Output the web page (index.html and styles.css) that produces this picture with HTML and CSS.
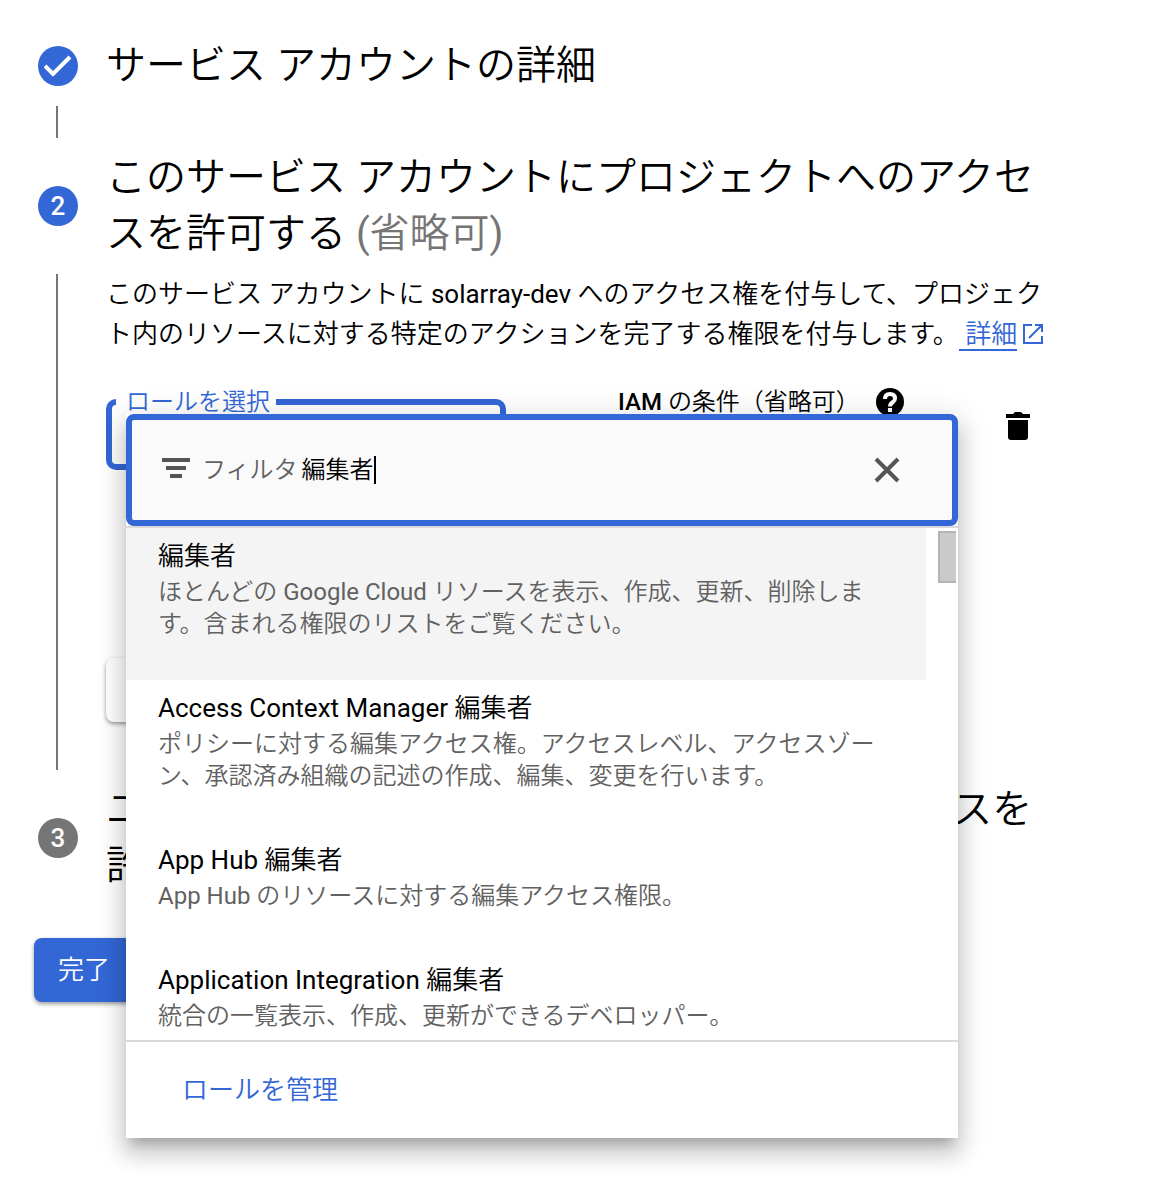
FILE: index.html
```
<!DOCTYPE html>
<html lang="ja">
<head>
<meta charset="utf-8">
<title>サービス アカウントの作成</title>
<link rel="stylesheet" href="styles.css">
</head>
<body>
<main class="page">
  <!-- Step 1: done -->
  <section class="step">
    <span class="badge">
      <svg width="28" height="28" viewBox="0 0 28 28"><path d="M1 14 L9 22 L26 5" fill="none" stroke="#fff" stroke-width="4"/></svg>
    </span>
    <h2 class="stepTitle">サービス アカウントの詳細</h2>
  </section>
  <div class="connector shortLine"></div>

  <!-- Step 2: current -->
  <section class="step">
    <span class="badge">2</span>
    <h2 class="stepTitle">このサービス アカウントにプロジェクトへのアクセスを許可する <span class="optional">(省略可)</span></h2>
  </section>
  <div class="stepBody">
    <div class="connector"></div>
    <div class="stepContent">
      <p class="description">このサービス アカウントに solarray-dev へのアクセス権を付与して、プロジェクト内のリソースに対する特定のアクションを完了する権限を付与します。<a class="detailLink" href="#"><span class="linkText">&nbsp;詳細</span><svg class="openIcon" width="20" height="20" viewBox="0 0 20 20"><path d="M9 1H1V19H19V12M12 1H19V8M18 2L6 14" fill="none" stroke="currentColor" stroke-width="2"/></svg></a></p>
      <div class="roleRow">
        <fieldset class="roleField">
          <legend><label for="role">ロールを選択</label></legend>
          <select id="role"><option></option></select>
        </fieldset>
        <div class="condition">
          <span><b>IAM</b> の条件（省略可）</span>
          <button type="button" class="iconButton" aria-label="ヘルプ">
            <svg width="28" height="28" viewBox="0 0 28 28"><circle cx="14" cy="14" r="14"/><path d="M9 11Q9 6 14 6Q19 6 19 10.500Q19 12.500 17 14Q14 16 14 18.500M14 20V24" fill="none" stroke="#fff" stroke-width="4"/></svg>
          </button>
        </div>
        <button type="button" class="iconButton deleteButton" aria-label="削除">
          <svg width="24" height="28" viewBox="0 0 24 28"><path d="M0 2H7L9 0H15L17 2H24V6H0zM2 8H22V25Q22 28 19 28H5Q2 28 2 25z"/></svg>
        </button>

        <!-- Role picker, opens over the row -->
        <div class="picker">
          <div class="filterBar">
            <svg width="28" height="24" viewBox="0 0 28 24"><path d="M0 0H28V4H0zM4 8H24V12H4zM8 16H20V20H8z" fill="#555"/></svg>
            <label class="filterLabel" for="filter">フィルタ</label>
            <input class="filterInput" type="text" id="filter" value="編集者">
            <span class="caret"></span>
            <button type="button" class="iconButton clearButton" aria-label="クリア">
              <svg width="26" height="26" viewBox="0 0 26 26"><path d="M2 2L24 24M24 2L2 24" stroke="#555" stroke-width="4"/></svg>
            </button>
          </div>
          <div class="optionArea">
            <ul class="options" role="listbox" aria-label="ロール">
              <li class="option selected" role="option" aria-selected="true">
                <div class="optionName">編集者</div>
                <div class="optionText">ほとんどの Google Cloud リソースを表示、作成、更新、削除します。含まれる権限のリストをご覧ください。</div>
              </li>
              <li class="option" role="option">
                <div class="optionName">Access Context Manager 編集者</div>
                <div class="optionText">ポリシーに対する編集アクセス権。アクセスレベル、アクセスゾーン、承認済み組織の記述の作成、編集、変更を行います。</div>
              </li>
              <li class="option" role="option">
                <div class="optionName">App Hub 編集者</div>
                <div class="optionText">App Hub のリソースに対する編集アクセス権限。</div>
              </li>
              <li class="option" role="option">
                <div class="optionName">Application Integration 編集者</div>
                <div class="optionText">統合の一覧表示、作成、更新ができるデベロッパー。</div>
              </li>
            </ul>
            <div class="scrollTrack"><div class="scrollThumb"></div></div>
          </div>
          <div class="pickerFooter"><a href="#">ロールを管理</a></div>
        </div>
      </div>
      <button type="button" class="button addButton" aria-label="別のロールを追加"></button>
    </div>
  </div>

  <!-- Step 3 -->
  <section class="step">
    <span class="badge pending">3</span>
    <h2 class="stepTitle">ユーザーにこのサービス アカウントへのアクセスを許可する</h2>
  </section>

  <button type="button" class="button doneButton">完了</button>
</main>
</body>
</html>
```
FILE: styles.css
```
* {
  box-sizing: border-box;
}
body {
  margin: 0;
  background-color: #fff;
  color: #000;
  font-family: Roboto, "Noto Sans CJK JP DemiLight", "Noto Sans CJK JP Light", "Noto Sans CJK JP", sans-serif;
  font-size: 26px;
  line-height: 40px;
}
button, input, select {
  font: inherit;
}
svg {
  display: block;
}
.page {
  min-height: 100vh;
  padding: 26px 100px 40px 34px;
}

/* Stepper */
.step {
  display: flex;
  align-items: center;
  gap: 28px;
  padding: 12px 0 12px 4px;
}
.badge {
  display: flex;
  align-items: center;
  justify-content: center;
  flex: none;
  width: 40px;
  height: 40px;
  border-radius: 50%;
  background-color: #3367d6;
  color: #fff;
  font-weight: 500;
}
.pending {
  background-color: #757575;
}
.stepTitle {
  margin: 0;
  font-size: 40px;
  font-weight: 400;
  line-height: 56px;
}
.optional {
  color: #757575;
}
.connector {
  flex: none;
  width: 2px;
  margin-left: 22px;
  background-color: #757575;
}
.shortLine {
  height: 32px;
}
.stepBody {
  display: flex;
  gap: 48px;
}
.stepContent {
  flex: 1;
  padding-bottom: 48px;
}
.description {
  margin: 0 0 32px;
}
.detailLink {
  color: #3367d6;
  text-decoration: none;
  white-space: nowrap;
}
.linkText {
  border-bottom: 2px solid #3367d6;
}
.openIcon {
  display: inline-block;
  margin-left: 6px;
  vertical-align: -1px;
}

/* Role row */
.roleRow {
  position: relative;
  display: flex;
  align-items: flex-start;
  margin-bottom: 188px;
  font-size: 24px;
  line-height: 32px;
}
.roleField {
  flex: 0 1 400px;
  min-width: 0;
  height: 84px;
  margin: 0 112px 0 0;
  padding: 0 4px;
  border: 6px solid #3367d6;
  border-radius: 10px;
}
.roleField legend {
  padding: 0 6px 0 10px;
  color: #3367d6;
}
.roleField select {
  width: 100%;
  border: 0;
  background: none;
  appearance: none;
}
.condition {
  display: flex;
  flex: 1;
  align-items: center;
  gap: 16px;
}
.condition b {
  font-weight: 500;
}
.iconButton {
  padding: 0;
  border: 0;
  background: none;
}
.deleteButton {
  margin: 26px 20px 0 0;
}

/* Picker */
.picker {
  position: absolute;
  top: 28px;
  left: 20px;
  right: 92px;
  background-color: #fff;
  box-shadow: 0 10px 10px -6px rgba(0, 0, 0, 0.2), 0 16px 20px 2px rgba(0, 0, 0, 0.14), 0 6px 28px 4px rgba(0, 0, 0, 0.12);
}
.filterBar {
  display: flex;
  align-items: center;
  height: 112px;
  padding: 0 52px 0 30px;
  border: 6px solid #3367d6;
  border-radius: 8px;
  background-color: #fafafa;
}
.filterLabel {
  margin: 0 4px 0 12px;
  color: #616161;
}
.filterInput {
  field-sizing: content;
  padding: 0;
  border: 0;
  outline: none;
  background: none;
  color: #000;
}
.caret {
  width: 2px;
  height: 28px;
  background-color: #000;
}
.clearButton {
  margin-left: auto;
}
.optionArea {
  display: flex;
  height: 516px;
  border-top: 2px solid #dadada;
  border-bottom: 2px solid #dadada;
  overflow: hidden;
}
.options {
  flex: 1;
  margin: 0;
  padding: 0;
  list-style: none;
}
.option {
  padding: 8px 48px 40px 32px;
}
.selected {
  background-color: #f4f4f4;
}
.optionName {
  font-size: 26px;
  line-height: 40px;
}
.optionText {
  color: #616161;
}
.scrollTrack {
  width: 32px;
  padding: 3px 2px 0 12px;
}
.scrollThumb {
  height: 52px;
  border: 2px solid #b4b4b4;
  border-right: 0;
  background-color: #cacaca;
}
.pickerFooter {
  padding: 28px 56px;
  font-size: 26px;
  line-height: 40px;
}
.pickerFooter a {
  color: #3367d6;
  text-decoration: none;
}

/* Buttons */
.button {
  display: block;
  height: 64px;
  padding: 0 24px;
  border: 0;
  border-radius: 8px;
  box-shadow: 0 2px 4px rgba(0, 0, 0, 0.4);
}
.addButton {
  width: 240px;
  background-color: #fff;
}
.doneButton {
  margin-top: 32px;
  background-color: #3367d6;
  color: #fff;
}
```
